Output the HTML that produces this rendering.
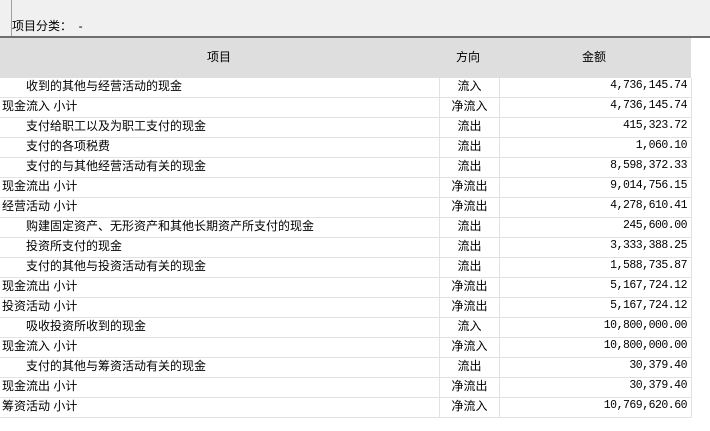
<!DOCTYPE html>
<html><head><meta charset="utf-8"><style>
body{margin:0;width:710px;height:431px;background:#fff;position:relative;overflow:hidden;font-family:"Liberation Sans","Noto Sans CJK SC",sans-serif;font-size:12px;color:#000}
.top{position:absolute;left:0;top:0;width:710px;height:36px;background:#f0f0f0}
.vl{position:absolute;left:11px;top:0;width:1px;height:36px;background:#a0a0a0}
.lbl{position:absolute;left:12px;top:18px;line-height:16px}
.bar{position:absolute;left:0;top:36px;width:710px;height:2px;background:#6e6e6e}
.hdr{position:absolute;left:0;top:38px;width:691px;height:40px;background:#dedede}
.hdr div{position:absolute;top:11px;line-height:16px}
.row{position:absolute;left:0;width:691px;height:19px;border-bottom:1px solid #e2e2e2}
.row span{position:absolute;top:-1px;line-height:18px;white-space:nowrap}
.c1{left:2px}.c1.i{left:26px}
.c2{left:440px;width:59px;text-align:center}
.c3{right:4px;font-family:"Liberation Mono","Noto Sans CJK SC",monospace;font-size:11.5px;letter-spacing:-0.5px}
.vcol{position:absolute;top:78px;height:340px;width:1px;background:#e2e2e2}
</style></head><body>
<div class="top"></div><div class="vl"></div>
<div class="lbl">项目分类：&nbsp;&nbsp;-</div>
<div class="bar"></div>
<div class="hdr"><div style="left:207px">项目</div><div style="left:456px">方向</div><div style="left:582px">金额</div></div>
<div class="vcol" style="left:439px"></div><div class="vcol" style="left:499px"></div><div class="vcol" style="left:691px"></div>
<div class="row" style="top:78px"><span class="c1 i">收到的其他与经营活动的现金</span><span class="c2">流入</span><span class="c3">4,736,145.74</span></div>
<div class="row" style="top:98px"><span class="c1">现金流入 小计</span><span class="c2">净流入</span><span class="c3">4,736,145.74</span></div>
<div class="row" style="top:118px"><span class="c1 i">支付给职工以及为职工支付的现金</span><span class="c2">流出</span><span class="c3">415,323.72</span></div>
<div class="row" style="top:138px"><span class="c1 i">支付的各项税费</span><span class="c2">流出</span><span class="c3">1,060.10</span></div>
<div class="row" style="top:158px"><span class="c1 i">支付的与其他经营活动有关的现金</span><span class="c2">流出</span><span class="c3">8,598,372.33</span></div>
<div class="row" style="top:178px"><span class="c1">现金流出 小计</span><span class="c2">净流出</span><span class="c3">9,014,756.15</span></div>
<div class="row" style="top:198px"><span class="c1">经营活动 小计</span><span class="c2">净流出</span><span class="c3">4,278,610.41</span></div>
<div class="row" style="top:218px"><span class="c1 i">购建固定资产、无形资产和其他长期资产所支付的现金</span><span class="c2">流出</span><span class="c3">245,600.00</span></div>
<div class="row" style="top:238px"><span class="c1 i">投资所支付的现金</span><span class="c2">流出</span><span class="c3">3,333,388.25</span></div>
<div class="row" style="top:258px"><span class="c1 i">支付的其他与投资活动有关的现金</span><span class="c2">流出</span><span class="c3">1,588,735.87</span></div>
<div class="row" style="top:278px"><span class="c1">现金流出 小计</span><span class="c2">净流出</span><span class="c3">5,167,724.12</span></div>
<div class="row" style="top:298px"><span class="c1">投资活动 小计</span><span class="c2">净流出</span><span class="c3">5,167,724.12</span></div>
<div class="row" style="top:318px"><span class="c1 i">吸收投资所收到的现金</span><span class="c2">流入</span><span class="c3">10,800,000.00</span></div>
<div class="row" style="top:338px"><span class="c1">现金流入 小计</span><span class="c2">净流入</span><span class="c3">10,800,000.00</span></div>
<div class="row" style="top:358px"><span class="c1 i">支付的其他与筹资活动有关的现金</span><span class="c2">流出</span><span class="c3">30,379.40</span></div>
<div class="row" style="top:378px"><span class="c1">现金流出 小计</span><span class="c2">净流出</span><span class="c3">30,379.40</span></div>
<div class="row" style="top:398px"><span class="c1">筹资活动 小计</span><span class="c2">净流入</span><span class="c3">10,769,620.60</span></div>
</body></html>
